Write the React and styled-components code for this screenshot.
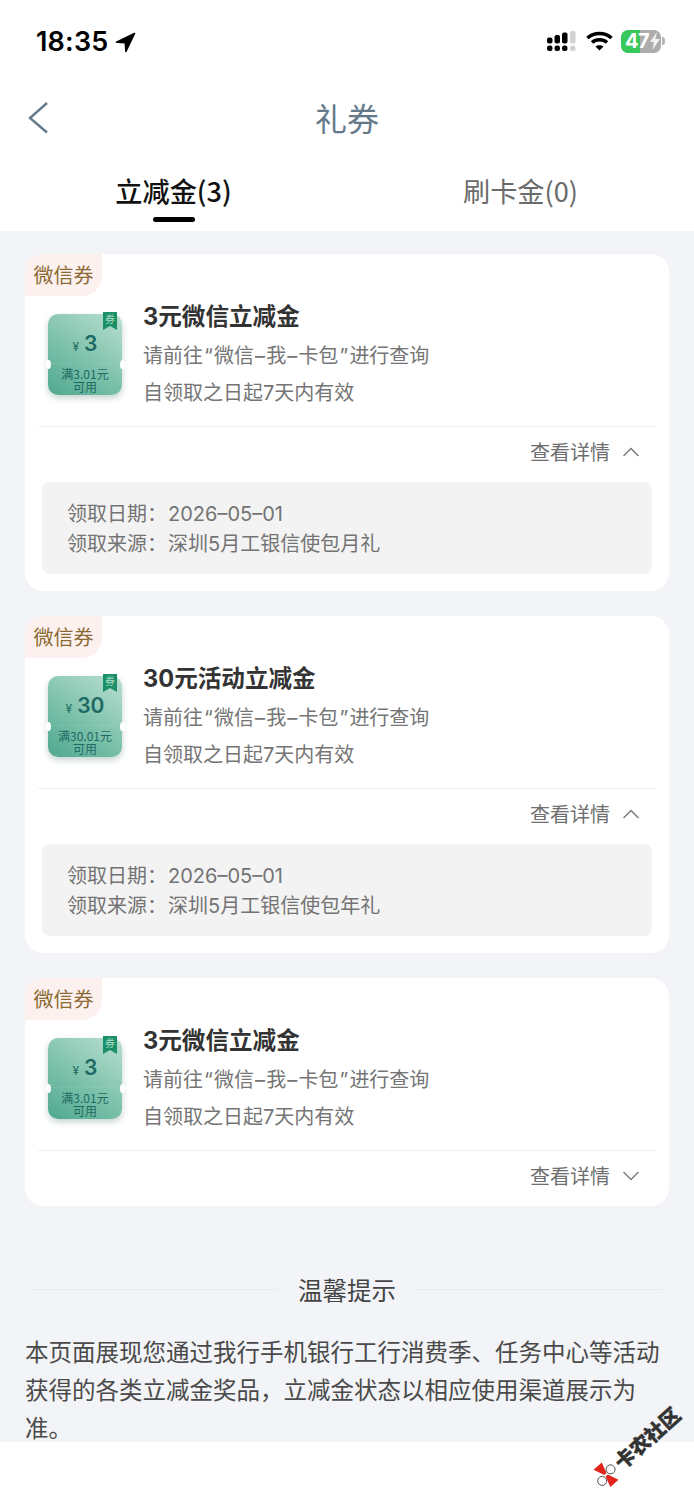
import React from 'react';
import styled, { createGlobalStyle } from 'styled-components';

const Global = createGlobalStyle`
  html, body { margin: 0; padding: 0; background: #fff; }
  body { font-family: Inter, "Noto Sans CJK SC", sans-serif; }
  * { box-sizing: border-box; }
`;
const Page = styled.div`
  position: relative; width: 694px; height: 1500px; overflow: hidden; background: #fff;
  display: flex; flex-direction: column;
`;
const StatusBar = styled.div`
  height: 82px; padding: 25px 29px 0 36px; display: flex; justify-content: space-between; align-items: flex-start;
`;
const Clock = styled.div`
  display: flex; align-items: center; gap: 7px; font: 600 27px/34px Inter, sans-serif; color: #000; letter-spacing: .2px;
`;
const StatusIcons = styled.div`
  display: flex; align-items: center; gap: 8px; height: 34px; margin-top: -1px;
`;
const Signal = styled.svg`margin-right: 2px;`;
const Battery = styled.div`
  position: relative; width: 40px; height: 23px; border-radius: 7px; overflow: hidden;
  background: linear-gradient(90deg, #37c75a 0 47%, #adadad 47% 100%);
  display: flex; align-items: center; padding-left: 4px;
  font: 700 20px/23px Inter, sans-serif; color: #fff; letter-spacing: -.5px;
`;
const BatteryWrap = styled.div`display: flex; align-items: center; gap: 1px;`;
const BatteryTip = styled.div`width: 3px; height: 8px; border-radius: 0 3px 3px 0; background: #b5b5b5;`;
const Header = styled.div`
  height: 73px; position: relative; display: flex; align-items: center; justify-content: center;
`;
const Title = styled.div`
  font: 400 32px/40px "Noto Sans CJK SC", sans-serif; color: #647a8b; margin-top: -4px;
`;
const Back = styled.svg`position: absolute; left: 27px; top: 19px;`;
const Tabs = styled.div`display: grid; grid-template-columns: 1fr 1fr; height: 76px;`;
const Tab = styled.div`
  position: relative; display: flex; justify-content: center; padding-top: 17px;
  font: ${p => (p.$active ? 500 : 400)} 27.2px/36px "Noto Sans CJK SC", Inter, sans-serif;
  color: ${p => (p.$active ? '#111' : '#6b6b6b')};
  ${p => p.$active ? `&::after { content: ''; position: absolute; left: 153px; top: 62px; width: 42px; height: 5px; border-radius: 3px; background: #000; }` : ''}
`;
const Main = styled.div`
  height: 1211px; background: #f3f4f7; padding: 23px 25px 0;
  display: flex; flex-direction: column; gap: 25px; flex: none;
`;
const Card = styled.div`
  width: 644px; background: #fff; border-radius: 18px; overflow: hidden; padding-bottom: ${p => (p.$open ? '17px' : '5px')};
  flex: none;
`;
const TagBadge = styled.div`
  width: 77px; height: 42px; background: #fdf1ef; border-radius: 0 0 20px 0; color: #8a6a32;
  font: 400 20px/42px "Noto Sans CJK SC", sans-serif; text-align: center;
`;
const Body = styled.div`
  display: flex; gap: 21px; padding: 8px 0 18px 10px; margin: 0 13px; border-bottom: 1px solid #eeeff1;
`;
const Ticket = styled.div`
  position: relative; flex: none; width: 74px; height: 81px; margin-top: 10px; border-radius: 10px;
  background: linear-gradient(35deg, #4fa88f 0%, #82c4ae 50%, #badfd1 100%);
  box-shadow: 0 3px 6px rgba(60, 110, 95, .3);
  display: flex; flex-direction: column; align-items: center; color: #1d6a62;
  &::before, &::after { content: ''; position: absolute; top: 46px; width: 5px; height: 9px; border-radius: 50%; background: #fff; }
  &::before { left: -2.5px; } &::after { right: -2.5px; }
`;
const Ribbon = styled.svg`position: absolute; right: 5px; top: -2px;`;
const Price = styled.div`
  height: 50px; padding-top: 16px; display: flex; align-items: baseline; justify-content: center; gap: 5px;
  font: 600 21px/27px Inter, sans-serif;
  border-bottom: 1px dotted rgba(255,255,255,.12); width: 64px;
`;
const Yen = styled.span`font: 400 12px/27px Inter, sans-serif;`;
const Terms = styled.div`
  padding-top: 3px; font: 400 12px/13px "Noto Sans CJK SC", Inter, sans-serif; text-align: center; white-space: pre-line;
`;
const Text = styled.div`display: flex; flex-direction: column;`;
const CardTitle = styled.div`
  font: 700 23.6px/26px Inter, "Noto Sans CJK SC", sans-serif; color: #333; margin-bottom: 11px;
`;
const Sub = styled.div`
  font: 400 20px/30px Inter, "Noto Sans CJK SC", sans-serif; color: #757575; margin-bottom: 7px; white-space: nowrap;
  &:last-child { margin-bottom: 0; }
`;
const Punct = styled.span`padding: 0 1.1px;`;
const Toggle = styled.div`
  height: 50px; display: flex; justify-content: flex-end; align-items: center; gap: 13px; padding-right: 30px;
  font: 400 20px/30px "Noto Sans CJK SC", sans-serif; color: #6f6f6f;
`;
const Details = styled.div`
  margin: 5px 17px 0; height: 92px; background: #f3f3f4; border-radius: 8px; padding: 17px 25px 15px;
  font: 400 20px/30px Inter, "Noto Sans CJK SC", sans-serif; color: #737373;
`;
const DetailRow = styled.div`display: flex; white-space: nowrap;`;
const DetailLabel = styled.span`width: 101px; flex: none;`;
const Heading = styled.div`
  display: flex; align-items: center; gap: 21px; margin: 41px 7px 0; height: 35px;
  font: 400 24.5px/35px "Noto Sans CJK SC", sans-serif; color: #444; justify-content: center; flex: none;
  &::before, &::after { content: ''; flex: 1; height: 1px; background: #e8e9ec; }
`;
const Notice = styled.p`
  margin: 0; font: 400 23.5px/38px "Noto Sans CJK SC", sans-serif; color: #4a4a4a; flex: none;
`;
const Watermark = styled.div`
  position: absolute; left: 583px; top: 1406px; width: 110px; height: 80px; transform: rotate(-42deg); transform-origin: center;
  display: flex; align-items: center; gap: 3px;
  font: 900 20px/24px "Noto Sans CJK SC", sans-serif; color: #333; white-space: nowrap;
  -webkit-text-stroke: .4px #333;
`;

const Chevron = ({ up }) => (
  <svg width="16" height="10" viewBox="0 0 16 10" fill="none" stroke="#7c7c7c" strokeWidth="1.5">
    <path d={up ? 'M.5 9L8 1.500 15.500 9' : 'M.5 1L8 8.500 15.500 1'} />
  </svg>
);

const coupons = [
  { title: '3元微信立减金', amount: '3', terms: '满3.01元\n可用', open: true, src: '深圳5月工银信使包月礼' },
  { title: '30元活动立减金', amount: '30', terms: '满30.01元\n可用', open: true, src: '深圳5月工银信使包年礼' },
  { title: '3元微信立减金', amount: '3', terms: '满3.01元\n可用', open: false },
];

export default function App() {
  return (
    <Page>
      <Global />
      <StatusBar>
        <Clock>
          18:35
          <svg width="21" height="21" viewBox="0 0 21 21">
            <path d="M19.500 1.500L1.500 10.200l8.800.6.6 8.700z" fill="#000" stroke="#000" strokeWidth="1.600" strokeLinejoin="round" />
          </svg>
        </Clock>
        <StatusIcons>
          <Signal width="29" height="21" viewBox="0 0 29 21" fill="#000">
            <rect x="0" y="6.500" width="5.500" height="6" rx="2" /><rect x="0" y="14.500" width="5.500" height="5.500" rx="2.200" />
            <rect x="7.500" y="4" width="5.500" height="8.500" rx="2" /><rect x="7.500" y="14.500" width="5.500" height="5.500" rx="2.200" />
            <rect x="15" y="1.500" width="5.500" height="11" rx="2" /><rect x="15" y="14.500" width="5.500" height="5.500" rx="2.200" />
            <rect x="23" y="0" width="5.500" height="12.500" rx="2" fill="#d2d2d2" /><rect x="23" y="14.500" width="5.500" height="5.500" rx="2.200" fill="#d2d2d2" />
          </Signal>
          <svg width="27" height="20" viewBox="0 0 27 20" fill="none" stroke="#000" strokeWidth="3.600">
            <path d="M1.500 7C8 1 19 1 25.500 7" /><path d="M6 11.500c4-3.600 11-3.600 15 0" />
            <path d="M13.500 19.500l-4-4c2-1.800 6-1.800 8 0z" fill="#000" stroke="none" />
          </svg>
          <BatteryWrap>
            <Battery>
              47
              <svg width="12" height="18" viewBox="0 0 12 18"><path d="M8 0L1 10h4l-1.500 8L11 7H6.500z" fill="#fff" opacity=".85" /></svg>
            </Battery>
            <BatteryTip />
          </BatteryWrap>
        </StatusIcons>
      </StatusBar>
      <Header>
        <Back width="22" height="34" viewBox="0 0 22 34" fill="none" stroke="#647a8b" strokeWidth="2.400">
          <path d="M20 2L3 17l17 14.500" />
        </Back>
        <Title>礼券</Title>
      </Header>
      <Tabs>
        <Tab $active>立减金(3)</Tab>
        <Tab>刷卡金(0)</Tab>
      </Tabs>
      <Main>
        {coupons.map((c, i) => (
          <Card key={i} $open={c.open}>
            <TagBadge>微信券</TagBadge>
            <Body>
              <Ticket>
                <Ribbon width="14" height="18" viewBox="0 0 14 18">
                  <path d="M0 0h14v18l-7-4-7 4z" fill="#1a8f68" />
                  <text x="7" y="11" textAnchor="middle" fontSize="10" fill="#a6dcc4" fontFamily="Noto Sans CJK SC">券</text>
                </Ribbon>
                <Price><Yen>¥</Yen>{c.amount}</Price>
                <Terms>{c.terms}</Terms>
              </Ticket>
              <Text>
                <CardTitle>{c.title}</CardTitle>
                <Sub>请前往<Punct>“</Punct>微信<Punct>–</Punct>我<Punct>–</Punct>卡包<Punct>”</Punct>进行查询</Sub>
                <Sub>自领取之日起7天内有效</Sub>
              </Text>
            </Body>
            <Toggle>查看详情<Chevron up={c.open} /></Toggle>
            {c.open && (
              <Details>
                <DetailRow><DetailLabel>领取日期：</DetailLabel>2026–05–01</DetailRow>
                <DetailRow><DetailLabel>领取来源：</DetailLabel>{c.src}</DetailRow>
              </Details>
            )}
          </Card>
        ))}
        <Heading>温馨提示</Heading>
        <Notice>本页面展现您通过我行手机银行工行消费季、任务中心等活动获得的各类立减金奖品，立减金状态以相应使用渠道展示为准。</Notice>
      </Main>
      <Watermark>
        <svg width="24" height="26" viewBox="0 0 24 26">
          <circle cx="5" cy="15" r="4.500" fill="#fff" stroke="#333" strokeWidth=".8" />
          <circle cx="19" cy="12" r="4.500" fill="#fff" stroke="#333" strokeWidth=".8" />
          <path d="M6 1h11l-3.500 11h-3zM10.500 14h3L18 25H7z" fill="#e1251b" />
        </svg>
        卡农社区
      </Watermark>
    </Page>
  );
}
